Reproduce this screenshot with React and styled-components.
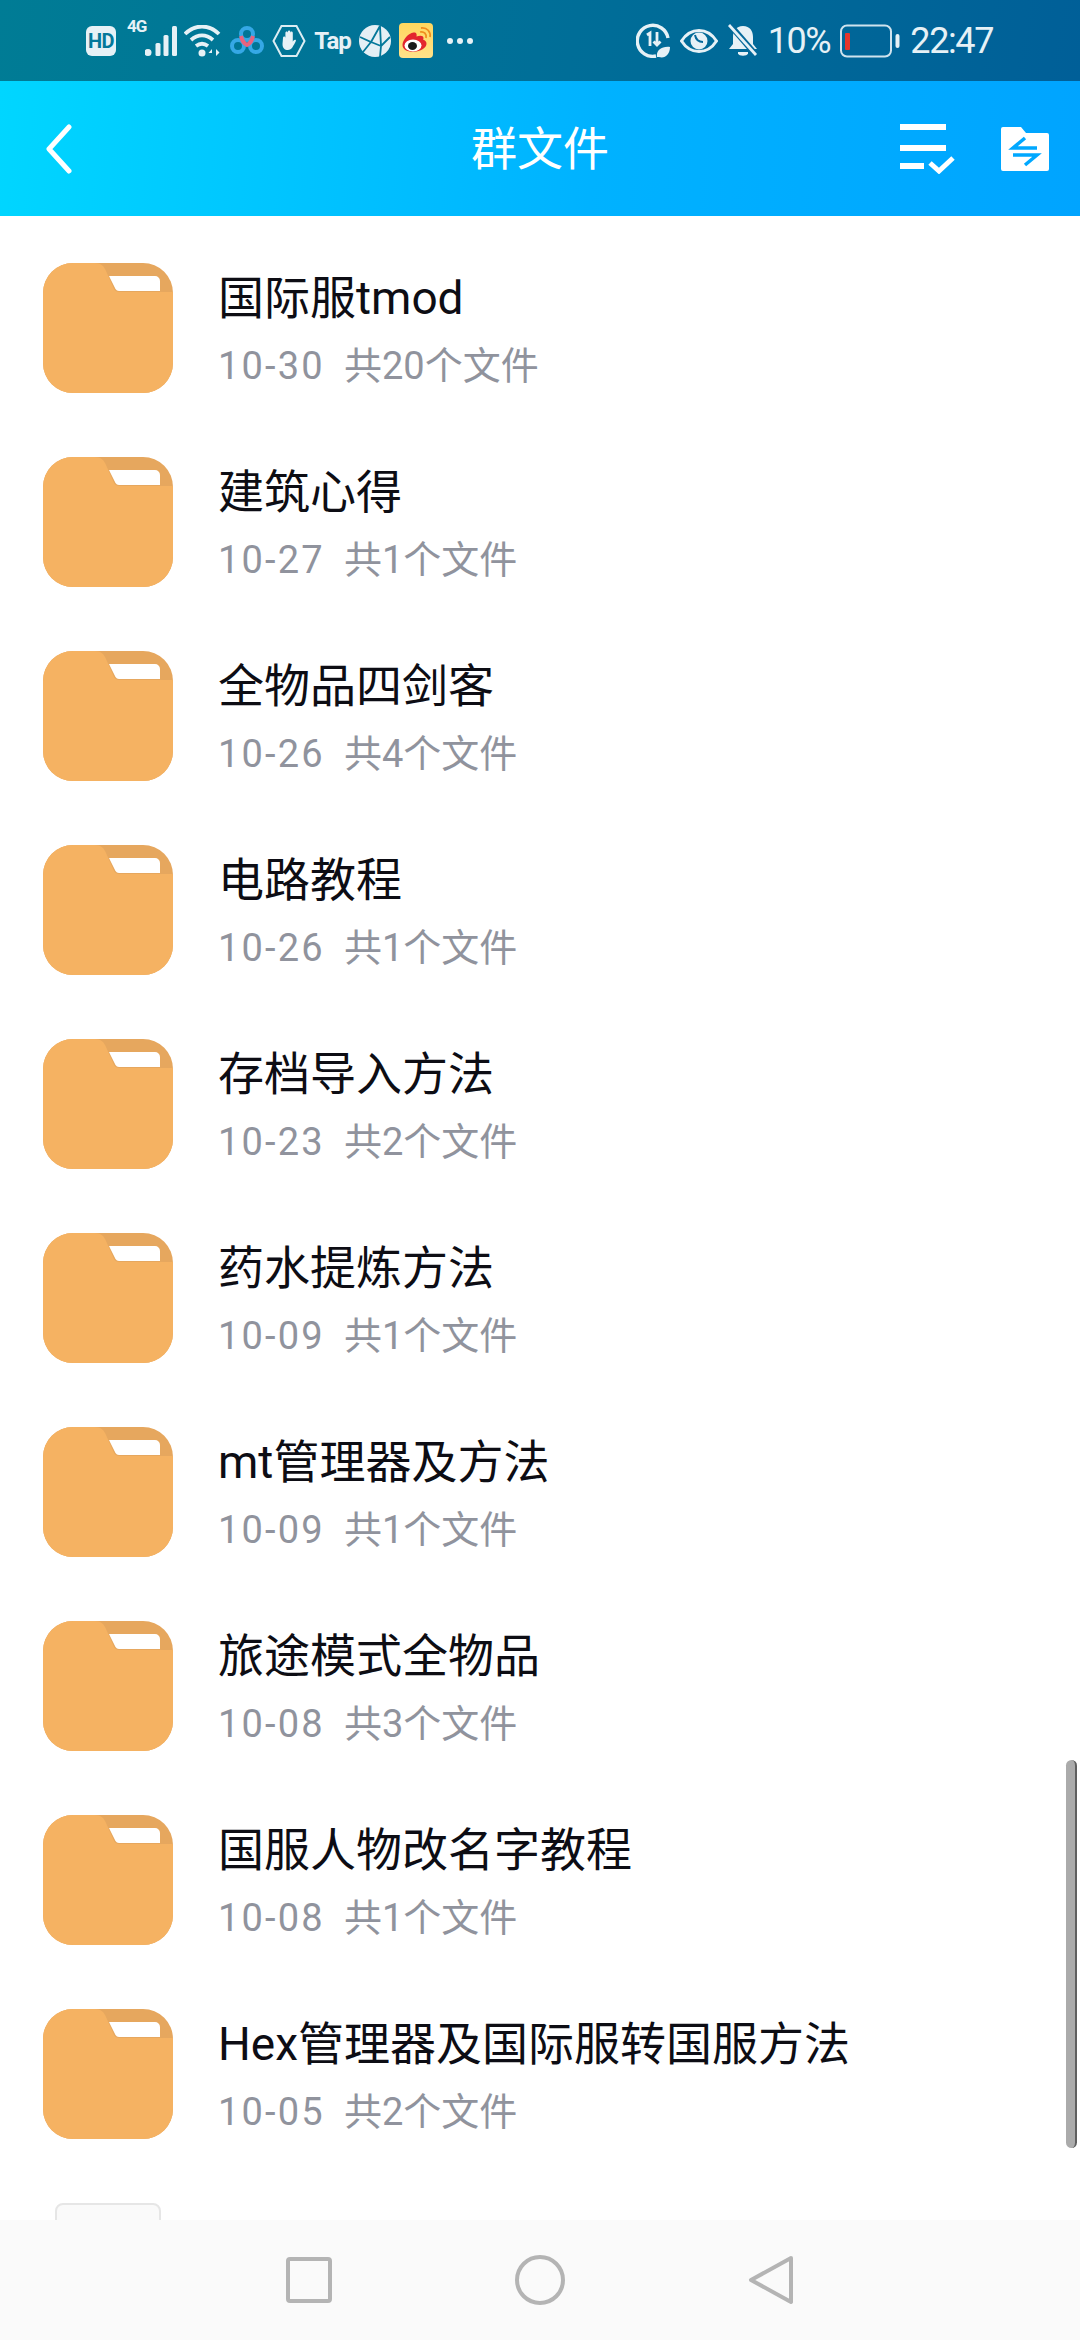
import React from "react";
import styled, { createGlobalStyle } from "styled-components";

const GlobalStyle = createGlobalStyle`
  html, body {
    margin: 0;
    padding: 0;
    background: #fff;
    font-family: Roboto, "Noto Sans CJK SC", sans-serif;
  }
`;

const files = [
  { name: "国际服tmod", date: "10-30", count: "共20个文件" },
  { name: "建筑心得", date: "10-27", count: "共1个文件" },
  { name: "全物品四剑客", date: "10-26", count: "共4个文件" },
  { name: "电路教程", date: "10-26", count: "共1个文件" },
  { name: "存档导入方法", date: "10-23", count: "共2个文件" },
  { name: "药水提炼方法", date: "10-09", count: "共1个文件" },
  { name: "mt管理器及方法", date: "10-09", count: "共1个文件" },
  { name: "旅途模式全物品", date: "10-08", count: "共3个文件" },
  { name: "国服人物改名字教程", date: "10-08", count: "共1个文件" },
  { name: "Hex管理器及国际服转国服方法", date: "10-05", count: "共2个文件" },
];

const FolderIcon = () => (
  <svg width="130" height="130" viewBox="0 0 130 130">
    <rect width="130" height="130" rx="30" fill="#e6a75e" />
    <path d="M66 13H112a5 5 0 0 1 5 5V28H76a4 4 0 0 1-3.500-2z" fill="#fff" />
    <path
      d="M30 0H52c6 0 9 3 11 8l8 18c1 2 3 3 5 3H130V100a30 30 0 0 1-30 30H30A30 30 0 0 1 0 100V30A30 30 0 0 1 30 0z"
      fill="#f5b262"
    />
  </svg>
);

const BaiduIcon = () => (
  <svg width="34" height="30" viewBox="0 0 34 30" fill="none">
    <circle cx="8" cy="20" r="6" stroke="#35a8e6" strokeWidth="4" />
    <circle cx="26" cy="20" r="6" stroke="#35a8e6" strokeWidth="4" />
    <circle cx="17" cy="8" r="6" stroke="#35a8e6" strokeWidth="4" />
    <path d="M11 10c1 5 4 8 6 9 2-1 5-4 6-9" stroke="#e8637f" strokeWidth="4" />
  </svg>
);

const HandIcon = () => (
  <svg width="34" height="34" viewBox="0 0 34 34" fill="none">
    <path d="M9.500 2H24.500L32.500 17 24.500 32H9.500L1.500 17z" stroke="#dcedf3" strokeWidth="2" />
    <path
      d="M11 14c0-2 2.400-2 2.400 0V9c0-2 2.400-2 2.400 0V8c0-2 2.600-2 2.600 0v1c0-2 2.400-2 2.400 0v9c0-1 2-3 3-2 .8.700-2 5-3.500 7.500-1 1.500-2.500 2.500-4.500 2.500-3 0-5.300-2-5.300-6z"
      fill="#e6f1f6"
    />
  </svg>
);

const GlobeIcon = () => (
  <svg width="32" height="34" viewBox="0 0 32 34" fill="none">
    <circle cx="16" cy="17" r="16" fill="#e4eff5" />
    <path
      d="M1 13l11 5 9-16M12 18l-8 10M12 18l10 4-1 11M22 22l9-9M21 2l1 20"
      stroke="#04789a"
      strokeWidth="1.800"
    />
  </svg>
);

const WeiboIcon = () => (
  <svg width="34" height="35" viewBox="0 0 34 35" fill="none">
    <defs>
      <linearGradient id="wb" x1="0" y1="0" x2="0" y2="1">
        <stop offset="0" stopColor="#ffd75e" />
        <stop offset="1" stopColor="#ffe28a" />
      </linearGradient>
    </defs>
    <rect width="34" height="35" rx="4" fill="url(#wb)" />
    <path
      d="M3.500 22c0-5 6-12 11-12.500 3-.3 3.500 2 3 4 3-1.200 7-1.500 7 1.500 0 .8-.3 1.300-.3 1.800 2 .6 3.300 2 3.300 4 0 4-6 8-13 8S3.500 26 3.500 22z"
      fill="#e3262e"
    />
    <ellipse cx="14" cy="22.500" rx="8.500" ry="6" fill="#fff" />
    <ellipse cx="13.500" cy="23" rx="4.500" ry="4" fill="#1a1a1a" />
    <path d="M21 9c4-1 7 2 6 6M22 5c6-1 10 4 9 9" stroke="#f08c1e" strokeWidth="1.800" />
  </svg>
);

const DataSaverIcon = () => (
  <svg width="34" height="35" viewBox="0 0 34 35" fill="none">
    <path d="M20 33A15.500 15.500 0 1 1 32 15" stroke="#e6f1f6" strokeWidth="3.400" />
    <path d="M11 12l3-2v13M21 9v13M17.500 18.500 21 22l3.500-3.500" stroke="#e6f1f6" strokeWidth="2.800" />
    <path d="M21 34c-1-6 4-11 13-10 0 7-5 12-11 10z" fill="#e6f1f6" />
  </svg>
);

const EyeIcon = () => (
  <svg width="38" height="24" viewBox="0 0 38 24" fill="none">
    <path d="M1.500 12C6 5 12 1.500 19 1.500S32 5 36.500 12C32 19 26 22.500 19 22.500S6 19 1.500 12z" stroke="#e6f1f6" strokeWidth="3" />
    <circle cx="19" cy="12" r="8.500" fill="#e6f1f6" />
    <path d="M15 6c1 5 4 7 8 7" stroke="#04689a" strokeWidth="2" />
  </svg>
);

const MutedBellIcon = () => (
  <svg width="30" height="33" viewBox="0 0 30 33" fill="none">
    <path d="M15 2C8 2 5 7 5 13v7l-4 5h28l-4-5v-7C25 7 22 2 15 2z" fill="#e6f1f6" />
    <path d="M10 28h10v1.500c-1 3-9 3-10 0z" fill="#e6f1f6" />
    <path d="M2 1l26 30" stroke="#04689a" strokeWidth="6" />
    <path d="M1 1l27 30" stroke="#e6f1f6" strokeWidth="2.800" />
  </svg>
);

const BatteryIcon = () => (
  <svg width="60" height="34" viewBox="0 0 60 34" fill="none">
    <rect x="1" y="1.500" width="50" height="31" rx="6" stroke="#cfe3ee" strokeWidth="2" />
    <rect x="5" y="9" width="5" height="17" rx="1" fill="#e5352b" />
    <rect x="55.500" y="10" width="4" height="14" rx="2" fill="#e6f1f6" />
  </svg>
);

const SignalIcon = () => (
  <svg width="33" height="32" viewBox="0 0 33 32" fill="none">
    <circle cx="3" cy="27.500" r="3.500" fill="#e6f1f6" />
    <rect x="10.500" y="18" width="5" height="13" rx="1.500" fill="#e6f1f6" />
    <rect x="18.500" y="10" width="5" height="21" rx="1.500" fill="#e6f1f6" />
    <rect x="27" y="1" width="5" height="30" rx="1.500" fill="#e6f1f6" />
  </svg>
);

const WifiIcon = () => (
  <svg width="38" height="32" viewBox="0 0 38 32" fill="none">
    <path d="M1 9C11-1 25-1 35 9M7 15c7-6 15-6 22 0M12 21c4-3 8-3 12 0" stroke="#e6f1f6" strokeWidth="3.800" />
    <circle cx="18" cy="28" r="3.500" fill="#e6f1f6" />
    <path d="M28 31v-7l-3.500 4h3.500M32 24v7l3.500-3.500z" fill="#e6f1f6" />
  </svg>
);

const BackIcon = () => (
  <svg width="26" height="50" viewBox="0 0 26 50" fill="none">
    <path d="M23 3 3 25l20 22" stroke="#fff" strokeWidth="5" strokeLinecap="round" strokeLinejoin="round" />
  </svg>
);

const SelectIcon = () => (
  <svg width="56" height="50" viewBox="0 0 56 50" fill="none">
    <path d="M1 3H47M1 24H47M1 42H25" stroke="#fff" strokeWidth="6" />
    <path d="M31 39l9 8 14-13" stroke="#fff" strokeWidth="5" />
  </svg>
);

const TransferIcon = () => (
  <svg width="48" height="44" viewBox="0 0 48 44" fill="none">
    <path d="M2 0H20L25 6H46a2 2 0 0 1 2 2V42a2 2 0 0 1-2 2H2a2 2 0 0 1-2-2V2a2 2 0 0 1 2-2z" fill="#fff" />
    <path d="M36 21H12L24 11M12 28H36L24 38" stroke="#00a8ff" strokeWidth="3.500" />
  </svg>
);

const Page = styled.div`
  width: 1080px;
  height: 2340px;
  display: flex;
  flex-direction: column;
  overflow: hidden;
  background: #fff;
`;

const StatusBar = styled.div`
  height: 81px;
  flex: none;
  display: flex;
  align-items: center;
  justify-content: space-between;
  padding: 0 87px 0 86px;
  background: linear-gradient(100deg, #007c95, #006f98 50%, #005f98);
  color: #e6f1f6;
`;

const StatusGroup = styled.div`
  display: flex;
  align-items: center;
  gap: ${({ $gap }) => $gap}px;
`;

const HdBadge = styled.span`
  width: 30px;
  height: 30px;
  border-radius: 6px;
  background: #e6f1f6;
  color: #04789a;
  font-size: 20px;
  font-weight: 700;
  line-height: 30px;
  text-align: center;
  letter-spacing: -0.5px;
`;

const NetworkLabel = styled.span`
  font-size: 17px;
  font-weight: 700;
  line-height: 18px;
  align-self: flex-start;
  margin: -6px -9px 0 3px;
  letter-spacing: -1px;
`;

const Signal = styled.div`
  display: flex;
  align-items: flex-end;
  margin-right: -2px;
`;

const TapLabel = styled.span`
  font-size: 24px;
  font-weight: 700;
  letter-spacing: -1px;
  line-height: 30px;
`;

const Dots = styled.span`
  display: flex;
  gap: 4px;
  margin-left: 6px;

  i {
    width: 6px;
    height: 6px;
    border-radius: 50%;
    background: #e6f1f6;
  }
`;

const StatusText = styled.span`
  font-size: 36px;
  line-height: 40px;
  letter-spacing: -1.4px;
`;

const Header = styled.header`
  height: 135px;
  flex: none;
  display: flex;
  align-items: center;
  justify-content: space-between;
  padding: 0 31px 0 46px;
  position: relative;
  background: linear-gradient(95deg, #00d6ff, #00b2ff 55%, #00a4ff);
`;

const HeaderTitle = styled.h1`
  position: absolute;
  left: 0;
  right: 0;
  margin: 0;
  text-align: center;
  color: #fff;
  font-size: 46px;
  font-weight: 400;
  line-height: 60px;
`;

const HeaderActions = styled.div`
  display: flex;
  align-items: center;
  gap: 46px;
`;

const List = styled.main`
  flex: 1;
  min-height: 0;
  position: relative;
  overflow: hidden;
  padding-top: 15px;
`;

const Row = styled.div`
  height: 194px;
  display: flex;
  align-items: center;
  padding-left: 43px;
  gap: 45px;
`;

const Blank = styled.div`
  width: 106px;
  height: 130px;
  margin: 0 12px;
  box-sizing: border-box;
  border: 2px solid #e6e6e6;
  border-radius: 8px;
  background: #fafafa;
`;

const RowText = styled.div`
  display: flex;
  flex-direction: column;
  gap: 14px;
  padding-top: 4px;
`;

const Name = styled.div`
  color: #0d0d14;
  font-size: 46px;
  line-height: 58px;
  white-space: nowrap;
`;

const Meta = styled.div`
  display: flex;
  gap: 19px;
  color: #90939d;
  font-size: 38px;
  line-height: 50px;
`;

const MetaDate = styled.span`
  letter-spacing: 2.200px;
`;

const Scrollbar = styled.div`
  position: absolute;
  top: 1544px;
  right: 3px;
  width: 11px;
  height: 388px;
  box-sizing: border-box;
  border-radius: 6px;
  background: #ababab;
  border-right: 2px solid #5f5f5f;
`;

const NavBar = styled.nav`
  height: 120px;
  flex: none;
  display: flex;
  align-items: center;
  justify-content: center;
  gap: 181px;
  background: #fafafa;
`;

const App = () => (
  <>
    <GlobalStyle />
    <Page>
      <StatusBar>
        <StatusGroup $gap={8}>
          <HdBadge>HD</HdBadge>
          <NetworkLabel>4G</NetworkLabel>
          <Signal>
            <SignalIcon />
          </Signal>
          <WifiIcon />
          <BaiduIcon />
          <HandIcon />
          <TapLabel>Tap</TapLabel>
          <GlobeIcon />
          <WeiboIcon />
          <Dots>
            <i />
            <i />
            <i />
          </Dots>
        </StatusGroup>
        <StatusGroup $gap={10}>
          <DataSaverIcon />
          <EyeIcon />
          <MutedBellIcon />
          <StatusText>10%</StatusText>
          <BatteryIcon />
          <StatusText>22:47</StatusText>
        </StatusGroup>
      </StatusBar>
      <Header>
        <BackIcon />
        <HeaderTitle>群文件</HeaderTitle>
        <HeaderActions>
          <SelectIcon />
          <TransferIcon />
        </HeaderActions>
      </Header>
      <List>
        {files.map((file) => (
          <Row key={file.name}>
            <FolderIcon />
            <RowText>
              <Name>{file.name}</Name>
              <Meta>
                <MetaDate>{file.date}</MetaDate>
                <span>{file.count}</span>
              </Meta>
            </RowText>
          </Row>
        ))}
        <Row>
          <Blank />
          <RowText>
            <Name>本地类工一起打包档</Name>
          </RowText>
        </Row>
        <Scrollbar />
      </List>
      <NavBar>
        <svg width="50" height="50" viewBox="0 0 50 50" fill="none">
          <rect x="4" y="4" width="42" height="42" rx="2" stroke="#b4b4b4" strokeWidth="4" />
        </svg>
        <svg width="50" height="50" viewBox="0 0 50 50" fill="none">
          <circle cx="25" cy="25" r="23" stroke="#b4b4b4" strokeWidth="4" />
        </svg>
        <svg width="50" height="50" viewBox="0 0 50 50" fill="none">
          <path d="M45 3 5 25l40 22z" stroke="#b4b4b4" strokeWidth="4" strokeLinejoin="round" />
        </svg>
      </NavBar>
    </Page>
  </>
);

export default App;
